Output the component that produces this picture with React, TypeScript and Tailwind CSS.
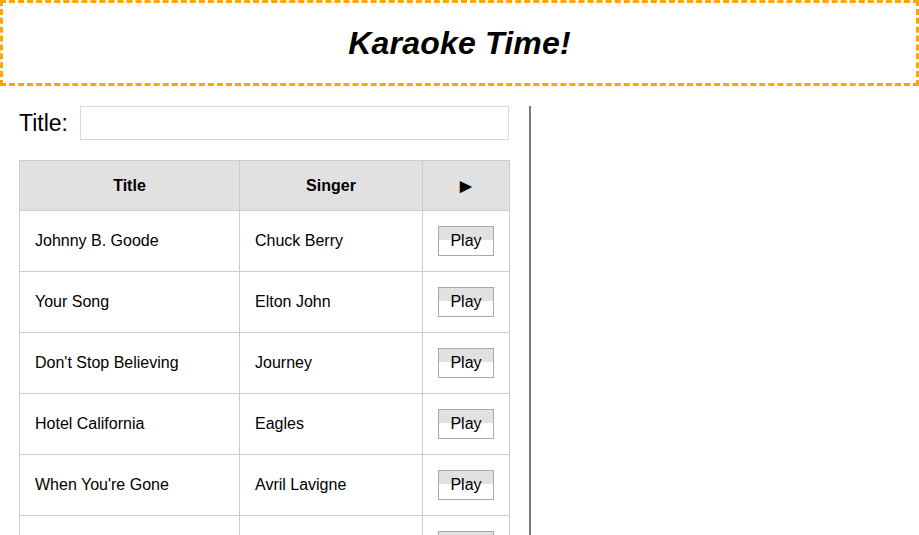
import React from 'react';

const songs = [
  { title: 'Johnny B. Goode', singer: 'Chuck Berry' },
  { title: 'Your Song', singer: 'Elton John' },
  { title: "Don't Stop Believing", singer: 'Journey' },
  { title: 'Hotel California', singer: 'Eagles' },
  { title: "When You're Gone", singer: 'Avril Lavigne' },
  { title: 'Bohemian Rhapsody', singer: 'Queen' },
];

const App: React.FC = () => {
  return (
    <div
      className="w-[919px] h-[535px] overflow-hidden bg-white text-black"
      style={{ fontFamily: '"Liberation Sans", Arial, sans-serif' }}
    >
      {/* header */}
      <div className="h-[86px] w-[919px] border-[3px] border-dashed border-[#ffa500] flex items-center justify-center">
        <h1 className="text-[32px] font-bold italic leading-none pb-[1px] tracking-[0.2px]">Karaoke Time!</h1>
      </div>

      {/* song list */}
      <div className="mt-[20px] w-[531px] h-[500px] border-r-2 border-[#7a7a7a] pl-[19px] pr-[20px]">
        <div className="flex items-center gap-[12px]">
          <label className="text-[23px] leading-none">Title:</label>
          <input className="h-[34px] flex-1 border border-[#d9d9d9] outline-none px-2" />
        </div>

        <table className="mt-[20px] w-[491px] border-collapse text-[16px]">
          <thead>
            <tr className="bg-[#e1e1e1] h-[50px]">
              <th className="w-[220px] border border-[#cccccc] font-bold">Title</th>
              <th className="w-[183px] border border-[#cccccc] font-bold">Singer</th>
              <th className="border border-[#cccccc] font-bold">
                <span className="text-[15px]">▶</span>
              </th>
            </tr>
          </thead>
          <tbody>
            {songs.map((s) => (
              <tr key={s.title} className="h-[61px]">
                <td className="border border-[#cccccc] px-[15px]">{s.title}</td>
                <td className="border border-[#cccccc] px-[15px]">{s.singer}</td>
                <td className="border border-[#cccccc] text-center">
                  <button className="w-[56px] h-[30px] border border-[#a9a9a9] bg-[linear-gradient(to_bottom,#e1e1e1_0%,#e1e1e1_45%,#ffffff_45%,#ffffff_100%)] text-[16px] leading-none">
                    Play
                  </button>
                </td>
              </tr>
            ))}
          </tbody>
        </table>
      </div>
    </div>
  );
};

export default App;
